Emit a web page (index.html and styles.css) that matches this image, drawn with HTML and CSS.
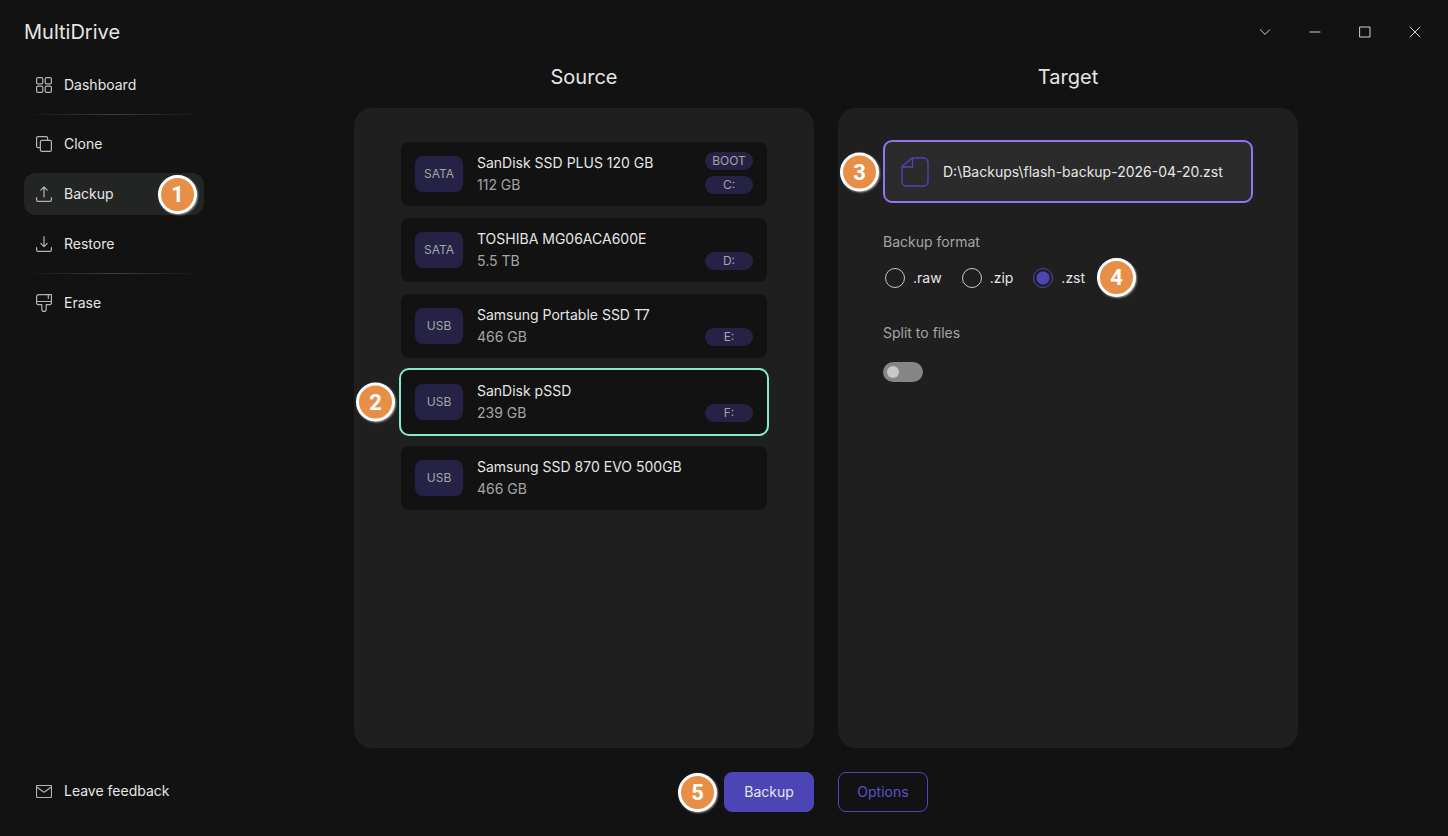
FILE: index.html
```html
<!DOCTYPE html>
<html lang="en">
    <head>
        <meta charset="utf-8">
        <meta name="viewport" content="width=device-width, initial-scale=1">
        <title>MultiDrive</title>
        <link rel="stylesheet" href="styles.css">
    </head>
    <body>
        <header class="titlebar">
            <h1>MultiDrive</h1>
            <div class="window-buttons">
                <button type="button" aria-label="More">
                    <svg width="12" height="12" viewBox="0 0 12 12"><path d="M1.3 3.7 6 8.4l4.7-4.7"/></svg>
                </button>
                <button type="button" aria-label="Minimize">
                    <svg width="12" height="12" viewBox="0 0 12 12"><path d="M1 6h10"/></svg>
                </button>
                <button type="button" aria-label="Maximize">
                    <svg width="12" height="12" viewBox="0 0 12 12"><path d="M1 1h10v10H1z"/></svg>
                </button>
                <button type="button" aria-label="Close">
                    <svg width="12" height="12" viewBox="0 0 12 12"><path d="m1 1 10 10M11 1 1 11"/></svg>
                </button>
            </div>
        </header>
        <div class="layout">
            <nav class="sidebar">
                <a class="nav-item" href="#dashboard">
                    <svg width="16" height="16" viewBox="0 0 16 16"><rect x=".6" y=".6" width="6.200" height="6.200" rx="1.300"/><rect x="9.200" y=".6" width="6.200" height="6.200" rx="1.300"/><rect x=".6" y="9.200" width="6.200" height="6.200" rx="1.300"/><rect x="9.200" y="9.200" width="6.200" height="6.200" rx="1.300"/></svg>
                    Dashboard
                </a>
                <hr>
                <a class="nav-item" href="#clone">
                    <svg width="16" height="16" viewBox="0 0 16 16"><rect x="4.4" y="4.4" width="11" height="11" rx="1.4"/><path d="M4.400 11.600H2A1.400 1.400 0 0 1 .6 10.200V2A1.400 1.400 0 0 1 2 .6h8.200A1.400 1.400 0 0 1 11.600 2v2.400"/></svg>
                    Clone
                </a>
                <a class="nav-item active" href="#backup">
                    <svg width="16" height="16" viewBox="0 0 16 16"><path d="M.6 11.500V14A1.400 1.400 0 0 0 2 15.400h12a1.400 1.400 0 0 0 1.400-1.400v-2.500M8 11V.9M4.800 4.100 8 .9l3.200 3.200"/></svg>
                    Backup
                    <span class="step">1</span>
                </a>
                <a class="nav-item" href="#restore">
                    <svg width="16" height="16" viewBox="0 0 16 16"><path d="M.6 11.500V14A1.400 1.400 0 0 0 2 15.400h12a1.400 1.400 0 0 0 1.400-1.400v-2.500M8 .6v10M4.800 7.400 8 10.600l3.200-3.200"/></svg>
                    Restore
                </a>
                <hr>
                <a class="nav-item" href="#erase">
                    <svg width="16" height="18" viewBox="0 0 16 18"><path d="M2.800.6h12.600v8.600a1.400 1.400 0 0 1-1.400 1.400h-3.800v4.600a2.200 2.200 0 0 1-4.400 0v-4.600H2A1.400 1.400 0 0 1 .6 9.200V2.800A2.200 2.200 0 0 1 2.800.6zM.6 7.500h14.800M12.300.6v3.800"/></svg>
                    Erase
                </a>
                <a class="nav-item feedback" href="#feedback">
                    <svg width="16" height="13" viewBox="0 0 16 13"><rect x=".5" y=".5" width="15" height="12" rx="1.200"/><path d="m.7 2 6.500 4.800a1.300 1.300 0 0 0 1.600 0L15.300 2"/></svg>
                    Leave feedback
                </a>
            </nav>
            <main>
                <div class="columns">
                    <section>
                        <h2>Source</h2>
                        <div class="panel">
                            <ul class="drives">
                                <li>
                                    <button type="button" class="drive">
                                        <span class="bus">SATA</span>
                                        <span class="info"><span>SanDisk SSD PLUS 120 GB</span><span class="size">112 GB</span></span>
                                        <span class="tags"><span>BOOT</span><span>C:</span></span>
                                    </button>
                                </li>
                                <li>
                                    <button type="button" class="drive">
                                        <span class="bus">SATA</span>
                                        <span class="info"><span>TOSHIBA MG06ACA600E</span><span class="size">5.5 TB</span></span>
                                        <span class="tags"><span>D:</span></span>
                                    </button>
                                </li>
                                <li>
                                    <button type="button" class="drive">
                                        <span class="bus">USB</span>
                                        <span class="info"><span>Samsung Portable SSD T7</span><span class="size">466 GB</span></span>
                                        <span class="tags"><span>E:</span></span>
                                    </button>
                                </li>
                                <li>
                                    <span class="step step-side">2</span>
                                    <button type="button" class="drive selected" aria-pressed="true">
                                        <span class="bus">USB</span>
                                        <span class="info"><span>SanDisk pSSD</span><span class="size">239 GB</span></span>
                                        <span class="tags"><span>F:</span></span>
                                    </button>
                                </li>
                                <li>
                                    <button type="button" class="drive">
                                        <span class="bus">USB</span>
                                        <span class="info"><span>Samsung SSD 870 EVO 500GB</span><span class="size">466 GB</span></span>
                                    </button>
                                </li>
                            </ul>
                        </div>
                    </section>
                    <section>
                        <h2>Target</h2>
                        <div class="panel target">
                            <div class="file-row">
                                <span class="step step-side">3</span>
                                <button type="button" class="file">
                                    <svg width="28" height="30" viewBox="0 0 28 30"><path d="M11 1h11.500A4.500 4.500 0 0 1 27 5.500v19a4.500 4.500 0 0 1-4.500 4.500h-17A4.500 4.500 0 0 1 1 24.500V9.500zM11.500 1v9H1"/></svg>
                                    D:\Backups\flash-backup-2026-04-20.zst
                                </button>
                            </div>
                            <fieldset class="formats">
                                <legend>Backup format</legend>
                                <div class="options">
                                    <label><input type="radio" name="format" value="raw">.raw</label>
                                    <label><input type="radio" name="format" value="zip">.zip</label>
                                    <label><input type="radio" name="format" value="zst" checked>.zst</label>
                                    <span class="step">4</span>
                                </div>
                            </fieldset>
                            <div class="split">
                                <label for="split">Split to files</label>
                                <input class="switch" type="checkbox" id="split" role="switch">
                            </div>
                        </div>
                    </section>
                </div>
                <div class="actions">
                    <div class="start">
                        <span class="step">5</span>
                        <button type="button" class="btn primary">Backup</button>
                    </div>
                    <button type="button" class="btn">Options</button>
                </div>
            </main>
        </div>
    </body>
</html>
```

FILE: styles.css
```css
*{
    box-sizing: border-box;
}
body{
    margin: 0;
    min-height: 100vh;
    display: flex;
    flex-direction: column;
    background-color: #121212;
    color: #e6e6e6;
    font: 14px/22px Inter, sans-serif;
}
button{
    font: inherit;
    color: inherit;
    border: none;
    cursor: pointer;
}
svg{
    flex: none;
    fill: none;
    stroke: #b4b4b4;
    stroke-width: 1.2;
    stroke-linecap: round;
    stroke-linejoin: round;
}

.titlebar{
    display: flex;
    align-items: center;
    justify-content: space-between;
    height: 64px;
    padding: 0 8px 0 24px;
}
.titlebar h1{
    margin: 0;
    font-size: 20px;
    font-weight: 400;
}
.window-buttons{
    display: flex;
}
.window-buttons button{
    display: flex;
    align-items: center;
    justify-content: center;
    width: 50px;
    height: 32px;
    padding: 0;
    background: none;
}
.window-buttons svg{
    stroke: #d0d0d0;
    stroke-width: 1;
}

.layout{
    flex: 1;
    display: flex;
    padding-bottom: 24px;
}
.sidebar{
    display: flex;
    flex-direction: column;
    width: 204px;
    padding-left: 24px;
}
.sidebar hr{
    width: 100%;
    height: 1px;
    margin: 8px 0;
    border: none;
    background: linear-gradient(90deg, transparent, #3c3c44 50%, transparent);
}
.nav-item{
    display: flex;
    align-items: center;
    gap: 12px;
    height: 42px;
    padding: 0 7px 0 12px;
    border-radius: 12px;
    color: inherit;
    text-decoration: none;
}
.nav-item + .nav-item{
    margin-top: 8px;
}
.nav-item.active{
    background-color: #232524;
}
.nav-item .step{
    margin-left: auto;
}
.nav-item.feedback{
    margin-top: auto;
}

/* numbered walkthrough markers */
.step{
    display: flex;
    align-items: center;
    justify-content: center;
    flex: none;
    width: 39px;
    height: 39px;
    border: 3px solid #fff;
    border-radius: 50%;
    background-color: #e78f47;
    box-shadow: 1px 1px 2px #999;
    color: #fff;
    font: bold 22px Roboto, sans-serif;
}
.step-side{
    position: absolute;
    right: 100%;
    top: 50%;
    margin-right: 6px;
    transform: translateY(-50%);
}
.file-row .step-side{
    margin-right: 4px;
}

main{
    flex: 1;
    display: flex;
    flex-direction: column;
    gap: 24px;
}
.columns, .actions{
    display: grid;
    grid-template-columns: repeat(2, minmax(0, 460px));
    justify-content: center;
    gap: 24px;
}
.columns{
    flex: 1;
}
section{
    display: flex;
    flex-direction: column;
}
h2{
    margin: 0 0 18px;
    font-size: 20px;
    line-height: 26px;
    font-weight: 400;
    text-align: center;
}
.panel{
    flex: 1;
    padding: 34px 47px;
    border-radius: 18px;
    background-color: #1f1f1f;
}
.panel.target{
    padding: 32px 45px;
}

.drives{
    display: flex;
    flex-direction: column;
    gap: 12px;
    margin: 0;
    padding: 0;
    list-style: none;
}
.drives li, .file-row{
    position: relative;
}
.drive{
    display: flex;
    align-items: center;
    gap: 14px;
    width: 100%;
    min-height: 64px;
    padding: 0 14px;
    border-radius: 8px;
    background-color: #121212;
    text-align: left;
}
.drive.selected{
    outline: 2px solid #87e8d0;
}
.bus{
    width: 48px;
    border-radius: 8px;
    background-color: #252245;
    color: #a5a5a5;
    font-size: 12px;
    line-height: 36px;
    text-align: center;
}
.info{
    flex: 1;
    display: flex;
    flex-direction: column;
}
.size{
    color: #a5a5a5;
}
.tags{
    align-self: stretch;
    display: flex;
    flex-direction: column;
    justify-content: flex-end;
    gap: 6px;
    padding: 10px 0 12px;
}
.tags span{
    width: 48px;
    border-radius: 9px;
    background-color: #252245;
    color: #a5a5a5;
    font-size: 12px;
    line-height: 18px;
    text-align: center;
}

.file{
    display: flex;
    align-items: center;
    gap: 14px;
    width: 100%;
    min-height: 63px;
    padding: 0 16px;
    border: 2px solid #9573f0;
    border-radius: 9px;
    background-color: #2b2b2b;
    text-align: left;
}
.file svg{
    stroke: #4d45b5;
    stroke-width: 1.4;
}
.formats{
    margin: 28px 0 0;
    padding: 0;
    border: none;
}
.formats legend, .split label{
    padding: 0;
    color: #a5a5a5;
}
.options{
    display: flex;
    align-items: center;
    gap: 20px;
    padding: 5px 2px 3px;
}
.options label{
    display: flex;
    align-items: center;
    gap: 8px;
}
.options .step{
    margin-left: -8px;
}
.options input{
    appearance: none;
    width: 20px;
    height: 20px;
    margin: 0;
    border: 1px solid #c8c8c8;
    border-radius: 50%;
}
.options input:checked{
    border-color: #4d45b5;
    background: radial-gradient(circle, #4d45b5 6px, transparent 7px);
}
.split{
    display: flex;
    flex-direction: column;
    align-items: flex-start;
    gap: 18px;
    margin-top: 22px;
}
.switch{
    appearance: none;
    width: 40px;
    height: 20px;
    margin: 0;
    padding: 4px;
    border-radius: 10px;
    background-color: #868686;
}
.switch::before{
    content: "";
    display: block;
    width: 12px;
    height: 12px;
    border-radius: 50%;
    background-color: #c8c8c8;
}
.switch:checked{
    background-color: #4d45b5;
}
.switch:checked::before{
    margin-left: auto;
}

.start{
    display: flex;
    align-items: center;
    justify-content: flex-end;
    gap: 7px;
}
.btn{
    width: 90px;
    height: 40px;
    padding: 0;
    border: 1px solid #4d45b5;
    border-radius: 8px;
    background: none;
    color: #5b50d0;
}
.btn.primary{
    background-color: #4d45b5;
    color: #e6e6e6;
}
```
